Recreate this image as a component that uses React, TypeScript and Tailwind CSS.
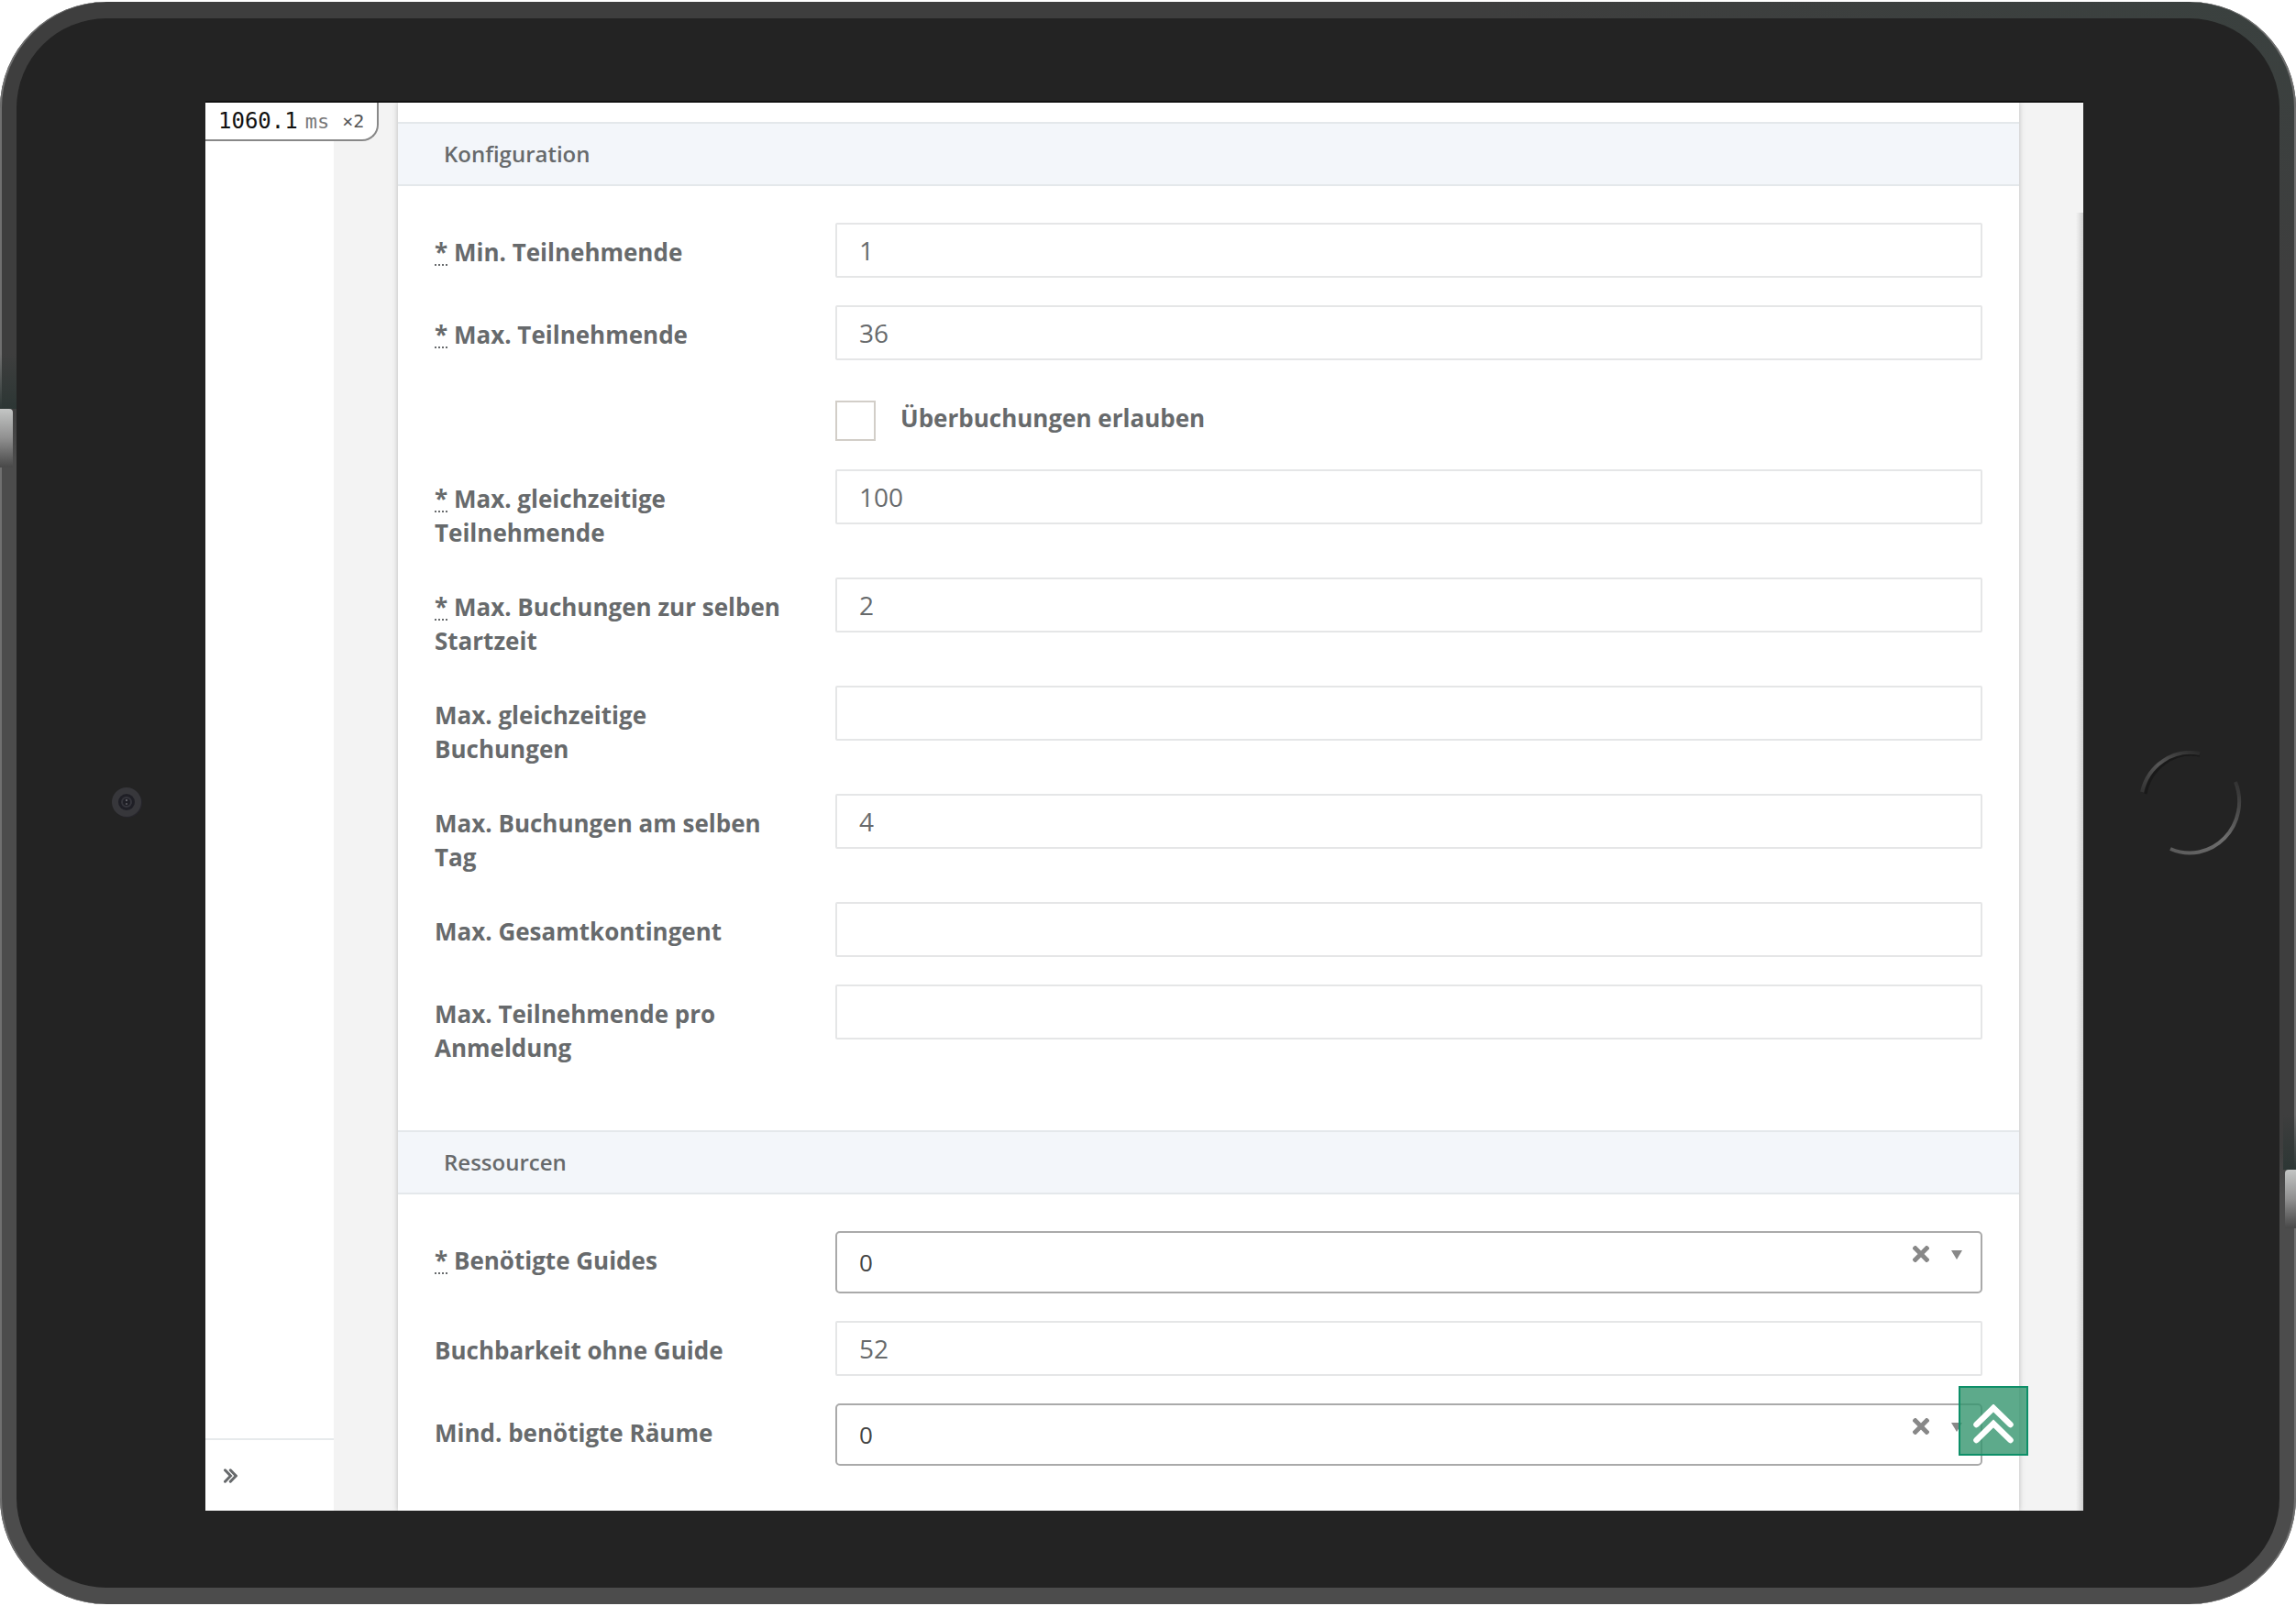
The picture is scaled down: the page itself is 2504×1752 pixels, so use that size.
import React from "react";

type Field = {
  id: string;
  label: string;
  value?: string;
  required?: boolean;
  kind?: "text" | "select";
};

const configFieldsTop: Field[] = [
  { id: "min", label: "Min. Teilnehmende", value: "1", required: true },
  { id: "max", label: "Max. Teilnehmende", value: "36", required: true },
];

const configFieldsBottom: Field[] = [
  { id: "max-sim", label: "Max. gleichzeitige Teilnehmende", value: "100", required: true },
  { id: "max-start", label: "Max. Buchungen zur selben Startzeit", value: "2", required: true },
  { id: "max-book", label: "Max. gleichzeitige Buchungen" },
  { id: "max-day", label: "Max. Buchungen am selben Tag", value: "4" },
  { id: "quota", label: "Max. Gesamtkontingent" },
  { id: "per-reg", label: "Max. Teilnehmende pro Anmeldung" },
];

const resourceFields: Field[] = [
  { id: "guides", label: "Benötigte Guides", value: "0", required: true, kind: "select" },
  { id: "no-guide", label: "Buchbarkeit ohne Guide", value: "52" },
  { id: "rooms", label: "Mind. benötigte Räume", value: "0", kind: "select" },
];

function SectionHeader({ children }: { children: React.ReactNode }) {
  return (
    <h2 className="flex h-[70px] shrink-0 items-center border-y-2 border-[#e4e8eb] bg-[#f3f6fa] px-[50px] text-[24px] font-semibold text-[#676a6c]">
      {children}
    </h2>
  );
}

function SelectBox({ id, value }: { id: string; value?: string }) {
  return (
    <div className="relative">
      <select
        id={id}
        defaultValue={value}
        className="block h-[68px] w-full appearance-none rounded-[5px] border-2 border-[#aaaaaa] bg-white px-6 text-[26px] text-[#444444]"
      >
        <option value={value}>{value}</option>
      </select>
      <button type="button" aria-label="Auswahl löschen" className="absolute top-4 right-[58px] size-[18px]">
        <svg viewBox="0 0 18 18" className="block size-[18px]">
          <path
            d="M2.8 2.8 L15.2 15.2 M15.2 2.8 L2.8 15.2"
            stroke="#888888"
            strokeWidth="5"
            strokeLinecap="square"
          />
        </svg>
      </button>
      <svg viewBox="0 0 12 10" className="pointer-events-none absolute top-[21px] right-[22px] h-[10px] w-3">
        <path d="M0 0H12L6 10Z" fill="#888888" />
      </svg>
    </div>
  );
}

function FieldRow({ field }: { field: Field }) {
  return (
    <div className="grid grid-cols-[437px_1fr] items-start">
      <label htmlFor={field.id} className="pt-[14px] pr-14 text-[26px] leading-[37px] font-bold text-[#676a6c]">
        {field.required && (
          <>
            <abbr
              title="Pflichtfeld"
              className="underline decoration-dotted decoration-2 underline-offset-[3px]"
            >
              *
            </abbr>{" "}
          </>
        )}
        {field.label}
      </label>
      {field.kind === "select" ? (
        <SelectBox id={field.id} value={field.value} />
      ) : (
        <input
          id={field.id}
          type="text"
          defaultValue={field.value}
          className="block h-[60px] w-full rounded-[2px] border-2 border-[#e5e6e7] bg-white px-6 text-[28px] text-[#676a6c]"
        />
      )}
    </div>
  );
}

function Camera() {
  return (
    <svg viewBox="0 0 36 36" className="size-9">
      <circle cx="19" cy="19" r="16" fill="#26252c" />
      <circle cx="18" cy="18" r="16" fill="#37373b" />
      <circle cx="18" cy="18" r="9" fill="#1f1f26" />
      <circle cx="18" cy="18" r="5" fill="none" stroke="#35353c" strokeWidth="2" />
      <circle cx="18" cy="16" r="1" fill="#77777c" />
      <circle cx="18" cy="20" r="1" fill="#5c5c62" />
    </svg>
  );
}

function HomeButton() {
  return (
    <svg viewBox="0 0 112 116" className="h-[116px] w-28">
      <defs>
        <linearGradient id="arcTop" x1="0" y1="1" x2="1" y2="0">
          <stop offset="0" stopColor="#333333" />
          <stop offset="0.5" stopColor="#565656" />
          <stop offset="1" stopColor="#2a2a2a" />
        </linearGradient>
        <linearGradient id="arcBottom" x1="0" y1="1" x2="1" y2="0">
          <stop offset="0" stopColor="#5a5a5a" />
          <stop offset="0.5" stopColor="#6e6e6e" />
          <stop offset="1" stopColor="#303030" />
        </linearGradient>
      </defs>
      <path d="M7 47 A51 53 0 0 1 66 5" fill="none" stroke="#191919" strokeWidth="3" />
      <path d="M3 45 A54 56 0 0 1 66 3" fill="none" stroke="url(#arcTop)" strokeWidth="4" />
      <path d="M105 34 A54 56 0 0 1 34 107" fill="none" stroke="url(#arcBottom)" strokeWidth="4" />
    </svg>
  );
}

export default function App() {
  return (
    <div className="h-screen bg-white py-[2px] font-['Open_Sans',sans-serif]">
      <div className="relative h-full overflow-hidden rounded-[116px] bg-[linear-gradient(198deg,#3a413f_0%,#3e3e3e_12%,#3e3e3e_49%,#4c4c4c_51%,#4c4c4c_100%)] p-[18px] shadow-[inset_2px_0_0_#707070,inset_-2px_0_0_#707070]">
        <div className="absolute top-[384px] left-0 h-[60px] w-[18px] bg-linear-to-b from-transparent to-[#2c3634]" />
        <div className="absolute top-[444px] left-0 h-[64px] w-[14px] rounded-tr-sm bg-linear-to-b from-[#c4c6c5] via-[#909090] to-[#484848]" />
        <div className="absolute top-[1214px] right-0 h-[60px] w-[14px] bg-linear-to-b from-transparent to-[#2c3634]" />
        <div className="absolute top-[1274px] right-0 h-[64px] w-3 rounded-tl-sm bg-linear-to-b from-[#c4c6c5] via-[#909090] to-[#484848]" />

        <div className="grid h-full grid-cols-[206px_1fr_214px] rounded-[98px] bg-[#232323] pt-[90px] pb-[84px]">
          <div className="flex items-center justify-center pr-6 pb-2 pl-[58px]">
            <Camera />
          </div>

          <main className="relative flex min-h-0 overflow-hidden border-t-2 border-[#111111] bg-[#f3f3f3]">
            <aside className="flex w-[140px] shrink-0 flex-col justify-end bg-white">
              <div className="flex h-[79px] items-center border-t-2 border-[#e7eaec] pl-5">
                <button type="button" aria-label="Menü ausklappen" className="h-4 w-[15px]">
                  <svg viewBox="0 0 15 16" className="block h-4 w-[15px]">
                    <path
                      d="M1.5 1.8 L7.5 8 L1.5 14.2 M7.3 1.8 L13.3 8 L7.3 14.2"
                      fill="none"
                      stroke="#676a6c"
                      strokeWidth="3"
                      strokeLinecap="round"
                    />
                  </svg>
                </button>
              </div>
            </aside>

            <form className="mr-[70px] ml-[70px] flex min-w-0 flex-1 flex-col bg-white pt-[21px] shadow-[0_0_6px_0_rgba(0,0,0,0.24)]">
              <SectionHeader>Konfiguration</SectionHeader>
              <div className="flex flex-col gap-[30px] px-10 pt-10 pb-[71px]">
                {configFieldsTop.map((f) => (
                  <FieldRow key={f.id} field={f} />
                ))}
                <div className="flex h-[59px] items-start pt-[14px] pl-[437px]">
                  <input
                    id="overbook"
                    type="checkbox"
                    className="size-11 shrink-0 appearance-none border-2 border-[#d2cec8] bg-white"
                  />
                  <label htmlFor="overbook" className="pl-[27px] text-[26px] leading-[38px] font-bold text-[#676a6c]">
                    Überbuchungen erlauben
                  </label>
                </div>
                {configFieldsBottom.map((f) => (
                  <FieldRow key={f.id} field={f} />
                ))}
              </div>
              <SectionHeader>Ressourcen</SectionHeader>
              <div className="flex flex-col gap-[30px] p-10">
                {resourceFields.map((f) => (
                  <FieldRow key={f.id} field={f} />
                ))}
              </div>
            </form>

            <div className="absolute top-0 left-0 flex h-[42px] items-center rounded-br-[18px] border-r-2 border-b-2 border-[#888888] bg-white px-[14px] font-['DejaVu_Sans_Mono',monospace] text-[24px] text-[#111111]">
              <span>1060.1</span>
              <span className="pl-2 text-[22px] text-[#777777]">ms</span>
              <span className="pl-[14px] text-[20px] text-[#555555]">×2</span>
            </div>

            <div className="absolute top-[120px] right-0 bottom-0 w-2 bg-linear-to-r from-transparent to-black/15" />

            <button
              type="button"
              aria-label="Nach oben"
              className="absolute right-[60px] bottom-[60px] flex size-[76px] items-center justify-center border-2 border-[#0d8f68] bg-[#34956ecc]"
            >
              <svg viewBox="0 0 44 44" className="mt-2 block size-11">
                <path
                  d="M3.5 22 L22 4 L40.500 22 M3.500 39 L22 21 L40.500 39"
                  fill="none"
                  stroke="#ffffff"
                  strokeWidth="6.500"
                  strokeLinecap="round"
                />
              </svg>
            </button>
          </main>

          <div className="flex items-center justify-center pb-1 pl-5">
            <HomeButton />
          </div>
        </div>
      </div>
    </div>
  );
}
